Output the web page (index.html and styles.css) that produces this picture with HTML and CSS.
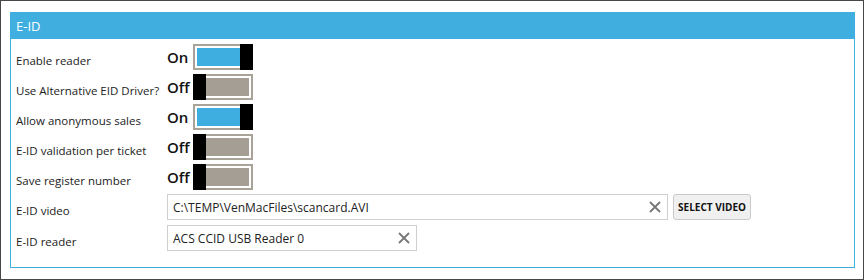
FILE: index.html
```html
<!DOCTYPE html>
<html lang="en">
<head>
    <meta charset="UTF-8">
    <title>E-ID settings</title>
    <link rel="stylesheet" href="styles.css">
</head>
<body>
    <div class="frame">
        <div class="panel">
            <div class="panel-header">E-ID</div>
            <div class="panel-body">
                <div class="row">
                    <span class="label">Enable reader</span>
                    <span class="state">On</span>
                    <span class="toggle on"><span class="fill"></span><span class="thumb"></span></span>
                </div>
                <div class="row">
                    <span class="label">Use Alternative EID Driver?</span>
                    <span class="state">Off</span>
                    <span class="toggle"><span class="fill"></span><span class="thumb"></span></span>
                </div>
                <div class="row">
                    <span class="label">Allow anonymous sales</span>
                    <span class="state">On</span>
                    <span class="toggle on"><span class="fill"></span><span class="thumb"></span></span>
                </div>
                <div class="row">
                    <span class="label">E-ID validation per ticket</span>
                    <span class="state">Off</span>
                    <span class="toggle"><span class="fill"></span><span class="thumb"></span></span>
                </div>
                <div class="row">
                    <span class="label">Save register number</span>
                    <span class="state">Off</span>
                    <span class="toggle"><span class="fill"></span><span class="thumb"></span></span>
                </div>
                <div class="row row-input">
                    <span class="label">E-ID video</span>
                    <div class="textbox video">
                        <span class="value">C:\TEMP\VenMacFiles\scancard.AVI</span>
                        <svg class="clear" width="12" height="12" viewBox="0 0 12 12"><path d="M1 1L11 11M11 1L1 11" stroke="#777" stroke-width="1.8" fill="none"/></svg>
                    </div>
                    <button class="btn">SELECT VIDEO</button>
                </div>
                <div class="row row-input">
                    <span class="label">E-ID reader</span>
                    <div class="textbox reader">
                        <span class="value">ACS CCID USB Reader 0</span>
                        <svg class="clear" width="12" height="12" viewBox="0 0 12 12"><path d="M1 1L11 11M11 1L1 11" stroke="#777" stroke-width="1.8" fill="none"/></svg>
                    </div>
                </div>
            </div>
        </div>
    </div>
</body>
</html>
```

FILE: styles.css
```css
body {
    margin: 0;
    background: #fff;
    font-family: 'Open Sans', 'Noto Sans', sans-serif;
    color: #222;
}

.frame {
    width: 864px;
    height: 280px;
    box-sizing: border-box;
    border: 1px solid #474747;
    padding: 11px 0 0 9px;
}

.panel {
    width: 845px;
    height: 256px;
    box-sizing: border-box;
    border: 1px solid #41aee0;
}

.panel-header {
    background: #41aee0;
    color: #fff;
    height: 27px;
    margin: -1px -1px 0;
    padding-left: 6px;
    font-size: 13px;
    line-height: 28px;
}

.panel-body {
    padding: 5px 0 0 5px;
}

.row {
    display: flex;
    align-items: flex-start;
    height: 30px;
}

.row-input {
    height: 31px;
}

.label {
    width: 151px;
    flex: none;
    font-size: 11.5px;
    line-height: 16px;
    padding-top: 9px;
}

.state {
    width: 26px;
    flex: none;
    font-size: 15px;
    font-weight: 600;
    line-height: 20px;
    margin-top: 3px;
    color: #111;
}

.toggle {
    position: relative;
    width: 60px;
    height: 26px;
    box-sizing: border-box;
    border: 2px solid #a8a298;
    padding: 2px;
    background: #fff;
    flex: none;
}

.toggle .fill {
    display: block;
    height: 100%;
    background: #a59e94;
}

.toggle.on .fill {
    background: #3eaee0;
}

.toggle .thumb {
    position: absolute;
    top: -2px;
    bottom: -2px;
    left: -2px;
    width: 13px;
    background: #000;
}

.toggle.on .thumb {
    left: auto;
    right: -2px;
}

.textbox {
    display: flex;
    align-items: center;
    height: 26px;
    box-sizing: border-box;
    border: 1px solid #cfcfcf;
    padding: 0 6px 0 5px;
    font-size: 12px;
    flex: none;
}

.textbox .value {
    flex: 1;
}

.video {
    width: 501px;
}

.reader {
    width: 250px;
}

.btn {
    margin-left: 5px;
    height: 26px;
    width: 78px;
    padding: 0;
    border: 1px solid #cacaca;
    border-radius: 3px;
    background: #f0f0f0;
    font-family: 'Open Sans', sans-serif;
    font-size: 10px;
    font-weight: 700;
    color: #111;
}
```
